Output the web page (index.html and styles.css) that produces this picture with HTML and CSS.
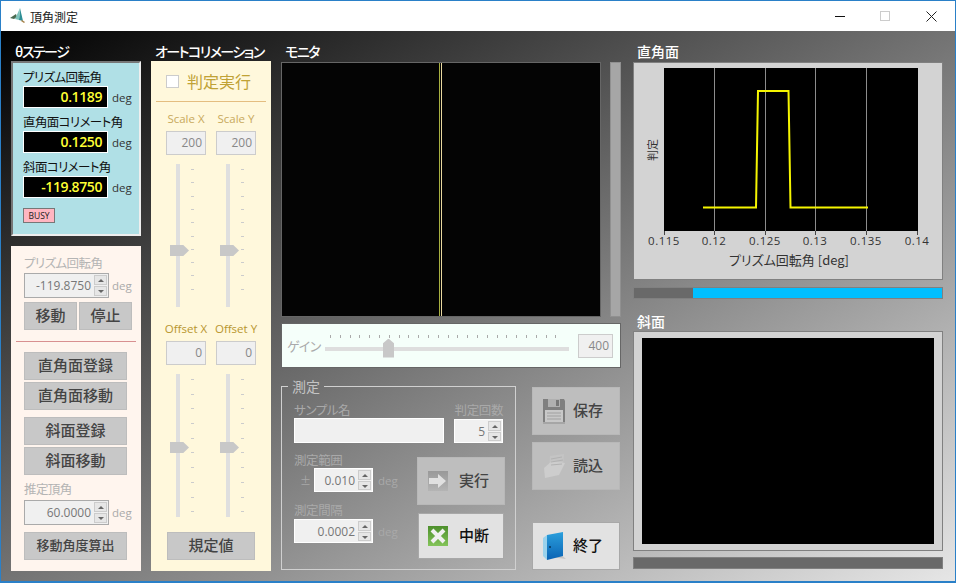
FILE: index.html
```html
<!DOCTYPE html>
<html lang="ja">
<head>
  <meta charset="UTF-8" />
  <title>頂角測定</title>
  <link rel="stylesheet" href="styles.css">
</head>
<body>
<div class="window">
  <div class="titlebar">
    <svg class="app-icon" width="17" height="16" viewBox="0 0 17 16">
      <path d="M1 10 L7 6 L8 9 L5 11 Z" fill="#4a6a50"/>
      <path d="M11 0 L14 13 L10 12 Z" fill="#2f8f96"/>
      <path d="M11 0 L10 12 L6 11 Z" fill="#7fc4bc"/>
      <path d="M13 12 L16 14 L15 15 L12 13 Z" fill="#a8824a"/>
    </svg>
    <span class="title-text">頂角測定</span>
    <div class="win-controls">
      <span class="win-min"></span>
      <span class="win-max"></span>
      <svg class="win-close" width="11" height="11" viewBox="0 0 11 11"><path d="M0.5 0.5 L10.5 10.5 M10.5 0.5 L0.5 10.5" stroke="#222" stroke-width="1" fill="none"/></svg>
    </div>
  </div>

  <div class="main">
    <!-- stage -->
    <div class="col">
      <div class="col-title title-kana">θステージ</div>
      <div class="stage-panel">
        <div class="stage-label">プリズム回転角</div>
        <div class="stage-row"><div class="readout">0.1189</div><span class="unit">deg</span></div>
        <div class="stage-label">直角面コリメート角</div>
        <div class="stage-row"><div class="readout">0.1250</div><span class="unit">deg</span></div>
        <div class="stage-label">斜面コリメート角</div>
        <div class="stage-row"><div class="readout">-119.8750</div><span class="unit">deg</span></div>
        <div class="busy">BUSY</div>
      </div>
      <div class="move-panel">
        <div class="move-label">プリズム回転角</div>
        <div class="spin-row">
          <div class="spin spin-wide"><span class="spin-val">-119.8750</span><span class="spin-btns"><i class="up"></i><i class="down"></i></span></div>
          <span class="unit-off">deg</span>
        </div>
        <div class="btn-pair">
          <button class="btn btn-half">移動</button>
          <button class="btn btn-half">停止</button>
        </div>
        <div class="red-line"></div>
        <button class="btn btn-full">直角面登録</button>
        <button class="btn btn-full btn-second">直角面移動</button>
        <button class="btn btn-full btn-group">斜面登録</button>
        <button class="btn btn-full btn-second">斜面移動</button>
        <div class="move-label label-apex">推定頂角</div>
        <div class="spin-row">
          <div class="spin spin-wide"><span class="spin-val">60.0000</span><span class="spin-btns"><i class="up"></i><i class="down"></i></span></div>
          <span class="unit-off">deg</span>
        </div>
        <button class="btn btn-full btn-calc">移動角度算出</button>
      </div>
    </div>

    <!-- autocollimation -->
    <div class="col">
      <div class="col-title title-kana">オートコリメーション</div>
      <div class="auto-panel">
        <div class="judge"><span class="check"></span><span>判定実行</span></div>
        <div class="auto-line"></div>
        <div class="pair pair-scale">
          <div class="axis"><div class="axis-label">Scale X</div><div class="numbox">200</div></div>
          <div class="axis"><div class="axis-label">Scale Y</div><div class="numbox">200</div></div>
        </div>
        <div class="pair sliders">
          <div class="vslider"><span class="track"></span><span class="thumb thumb-scale"></span><span class="ticks"></span></div>
          <div class="vslider"><span class="track"></span><span class="thumb thumb-scale"></span><span class="ticks"></span></div>
        </div>
        <div class="pair pair-offset">
          <div class="axis"><div class="axis-label">Offset X</div><div class="numbox">0</div></div>
          <div class="axis"><div class="axis-label">Offset Y</div><div class="numbox">0</div></div>
        </div>
        <div class="pair sliders">
          <div class="vslider"><span class="track"></span><span class="thumb thumb-offset"></span><span class="ticks ticks-offset"></span></div>
          <div class="vslider"><span class="track"></span><span class="thumb thumb-offset"></span><span class="ticks ticks-offset"></span></div>
        </div>
        <button class="btn btn-default">規定値</button>
      </div>
    </div>

    <!-- monitor -->
    <div class="col">
      <div class="col-title title-kana">モニタ</div>
      <div class="monitor-row">
        <div class="monitor"><span class="cross-y"></span><span class="cross-w"></span></div>
        <div class="monitor-scroll"></div>
      </div>
      <div class="gain-panel">
        <span class="gain-label">ゲイン</span>
        <div class="gain-slider"><span class="gain-ticks"></span><span class="gain-track"></span><span class="gain-thumb"></span></div>
        <div class="numbox gain-box">400</div>
      </div>
      <div class="lower">
        <fieldset class="measure">
          <legend>測定</legend>
          <div class="measure-top">
            <div>
              <div class="off-label">サンプル名</div>
              <div class="sample-input"></div>
            </div>
            <div class="count-block">
              <div class="off-label">判定回数</div>
              <div class="spin spin-count"><span class="spin-val">5</span><span class="spin-btns"><i class="up"></i><i class="down"></i></span></div>
            </div>
          </div>
          <div class="measure-bottom">
            <div class="measure-fields">
              <div class="off-label">測定範囲</div>
              <div class="field-row">
                <span class="pm">±</span>
                <div class="spin spin-range"><span class="spin-val">0.010</span><span class="spin-btns"><i class="up"></i><i class="down"></i></span></div>
                <span class="unit-faint">deg</span>
              </div>
              <div class="off-label label-step">測定間隔</div>
              <div class="field-row field-row-step">
                <div class="spin spin-step"><span class="spin-val">0.0002</span><span class="spin-btns"><i class="up"></i><i class="down"></i></span></div>
                <span class="unit-faint">deg</span>
              </div>
            </div>
            <div class="measure-btns">
              <button class="icon-btn off">
                <svg width="20" height="20" viewBox="0 0 20 20">
                  <defs><linearGradient id="arrowBg" x1="0" y1="0" x2="0" y2="1"><stop offset="0" stop-color="#999"/><stop offset="1" stop-color="#b4b4b4"/></linearGradient></defs>
                  <rect width="20" height="20" fill="url(#arrowBg)"/>
                  <path d="M1 7 H10 V3 L18 10 L10 17 V13 H1 Z" fill="#e0e0e0"/>
                </svg>
                <span>実行</span>
              </button>
              <button class="icon-btn on btn-stop">
                <svg width="20" height="20" viewBox="0 0 20 20">
                  <defs><linearGradient id="stopBg" x1="0" y1="0" x2="0" y2="1"><stop offset="0" stop-color="#4d8f2c"/><stop offset="1" stop-color="#84c45a"/></linearGradient></defs>
                  <rect width="20" height="20" fill="url(#stopBg)"/>
                  <path d="M4 4 L16 16 M16 4 L4 16" stroke="#f0f0f0" stroke-width="4"/>
                </svg>
                <span>中断</span>
              </button>
            </div>
          </div>
        </fieldset>
        <div class="file-btns">
          <button class="icon-btn off">
            <svg width="24" height="26" viewBox="0 0 24 26">
              <path d="M1 1 H22 L23 3 V24 H1 Z" fill="#7f7f7f"/>
              <rect x="6" y="1" width="12" height="8" fill="#b0b0b0"/>
              <rect x="14" y="2" width="3" height="6" fill="#777"/>
              <rect x="3" y="12" width="18" height="12" fill="#c8c8c8"/>
              <path d="M5 15 H19 M5 18 H19 M5 21 H19" stroke="#a0a0a0"/>
              <rect x="1" y="24" width="22" height="2" fill="#a6a6a6"/>
            </svg>
            <span>保存</span>
          </button>
          <button class="icon-btn off btn-load">
            <svg width="24" height="26" viewBox="0 0 24 26">
              <path d="M8 3 L22 1 L21 14 L7 16 Z" fill="#c4c4c4"/>
              <path d="M2 15 L10 8 L23 10 L17 22 L3 25 Z" fill="#cdcdcd"/>
              <path d="M9 6 L20 4 M9 9 L21 7 M9 12 L20 11" stroke="#b2b2b2"/>
            </svg>
            <span>読込</span>
          </button>
          <button class="icon-btn on btn-quit">
            <svg width="24" height="28" viewBox="0 0 24 28">
              <defs><linearGradient id="doorBg" x1="0" y1="0" x2="0" y2="1"><stop offset="0" stop-color="#2b9fdc"/><stop offset="1" stop-color="#0a63b4"/></linearGradient></defs>
              <path d="M1 24 L24 27 L18 22 Z" fill="#c4c4c4"/>
              <path d="M5 3 L21 0 V24 L5 28 Z" fill="url(#doorBg)"/>
              <path d="M1 6 L5 3 V28 L1 24 Z" fill="#9ad2ec"/>
              <circle cx="8" cy="15" r="1" fill="#06365a"/>
            </svg>
            <span>終了</span>
          </button>
        </div>
      </div>
    </div>

    <!-- charts -->
    <div class="col">
      <div class="col-title">直角面</div>
      <div class="chart-panel">
        <svg class="chart" width="308" height="216" viewBox="634 63 308 216">
          <rect x="664" y="68" width="254" height="163" fill="#000"/>
          <path d="M714.5 68 V231 M765.5 68 V231 M815.5 68 V231 M866.5 68 V231" stroke="#8c8c8c" fill="none"/>
          <path d="M664.5 231 V235 M714.5 231 V235 M765.5 231 V235 M815.5 231 V235 M866.5 231 V235 M917.5 231 V235" stroke="#444" fill="none"/>
          <path d="M703 207.5 H756 L758 91 H788.5 L790.5 207.5 H868" stroke="#f5f500" stroke-width="2" fill="none"/>
          <g class="tick-text">
            <text x="664" y="245">0.115</text>
            <text x="714" y="245">0.12</text>
            <text x="765" y="245">0.125</text>
            <text x="815" y="245">0.13</text>
            <text x="866" y="245">0.135</text>
            <text x="917" y="245">0.14</text>
          </g>
          <text class="axis-text" x="789" y="265">プリズム回転角 [deg]</text>
          <text class="axis-text small" transform="translate(657 150) rotate(-90)">判定</text>
        </svg>
      </div>
      <div class="progress"><span class="progress-fill"></span></div>
      <div class="col-title title-slope">斜面</div>
      <div class="slope-panel"><div class="slope-view"></div></div>
      <div class="progress progress-low"></div>
    </div>
  </div>
</div>
</body>
</html>
```

FILE: styles.css
```css
* {
  box-sizing: border-box;
}
html, body {
  margin: 0;
  height: 100%;
}
body {
  font-family: "Noto Sans CJK JP", "Noto Sans", sans-serif;
  font-feature-settings: "palt";
  font-size: 13px;
  color: #222;
  overflow: hidden;
}
.window {
  width: 956px;
  height: 583px;
  border: 1px solid #2a80c8;
  border-bottom-width: 2px;
  display: flex;
  flex-direction: column;
}
.titlebar {
  height: 30px;
  background: #fff;
  display: flex;
  align-items: center;
  padding-left: 8px;
  flex: none;
}
.title-text {
  margin-left: 4px;
  font-size: 12px;
  color: #222;
}
.win-controls {
  margin-left: auto;
  display: flex;
  align-items: center;
}
.win-min {
  width: 10px;
  height: 1px;
  background: #111;
  margin-right: 35px;
}
.win-max {
  width: 10px;
  height: 10px;
  border: 1px solid #ccc;
  margin-right: 36px;
}
.win-close {
  margin-right: 18px;
}

.main {
  flex: 1;
  background: linear-gradient(to bottom right, #000, #e6e6e6);
  display: grid;
  grid-template-columns: 130px 120px 340px 310px;
  column-gap: 10px;
  padding: 12px 0 0 10px;
}
.main > .col:last-child {
  margin: 0 -2px 0 2px;
}
.col-title {
  color: #fff;
  font-size: 14px;
  font-weight: 500;
  line-height: 16px;
  height: 18px;
  padding-left: 4px;
  white-space: nowrap;
}
.title-kana {
  letter-spacing: -1.5px;
}

/* stage */
.stage-panel {
  height: 175px;
  background: #b0e0e6;
  border: 2px solid #777;
  border-right-color: #eee;
  border-bottom-color: #eee;
  padding: 6px 0 0 10px;
}
.stage-label {
  font-size: 12.5px;
  letter-spacing: -0.6px;
  line-height: 15px;
  height: 17px;
  color: #111;
  white-space: nowrap;
}
.stage-row {
  display: flex;
  align-items: center;
  margin-bottom: 6px;
}
.readout {
  width: 85px;
  height: 22px;
  background: #000;
  border: 1px solid #fff;
  color: #ffff33;
  font-family: "Open Sans", sans-serif;
  font-size: 14px;
  font-weight: 600;
  letter-spacing: -0.4px;
  line-height: 20px;
  text-align: right;
  padding-right: 5px;
}
.unit {
  margin-left: 4px;
  font-family: "Open Sans", sans-serif;
  font-size: 11.5px;
  color: #333;
}
.busy {
  width: 32px;
  height: 15px;
  margin-top: 10px;
  background: #ffb6c1;
  border: 1px solid #777;
  font-family: "Open Sans", sans-serif;
  font-size: 8.5px;
  line-height: 13px;
  text-align: center;
  color: #222;
}

.move-panel {
  height: 325px;
  margin-top: 10px;
  background: #fff5ee;
  padding: 9px 0 0 13px;
}
.move-label {
  font-size: 12.5px;
  letter-spacing: -0.6px;
  line-height: 16px;
  color: #b4b4b4;
  height: 18px;
  white-space: nowrap;
}
.label-apex {
  margin-top: 6px;
  margin-bottom: 1px;
}
.spin-row {
  display: flex;
  align-items: center;
}
.unit-off {
  margin-left: 3px;
  font-family: "Open Sans", sans-serif;
  font-size: 11.5px;
  color: #aaa;
}
.spin {
  height: 25px;
  display: flex;
  align-items: center;
  justify-content: flex-end;
  background: #f0f0f0;
  border: 1px solid #aaa;
  font-family: "Open Sans", sans-serif;
  font-size: 12px;
  color: #777;
}
.spin-wide {
  width: 85px;
}
.spin-val {
  padding-right: 2px;
}
.spin-btns {
  width: 15px;
  height: 100%;
  padding: 1px;
  display: flex;
  flex-direction: column;
  gap: 1px;
}
.spin-btns i {
  flex: 1;
  background: #e6e6e6;
  border: 1px solid #ccc;
  position: relative;
}
.spin-btns i::after {
  content: "";
  position: absolute;
  left: 3px;
  top: 3px;
  border-left: 3px solid transparent;
  border-right: 3px solid transparent;
}
.spin-btns .up::after {
  border-bottom: 3px solid #666;
}
.spin-btns .down::after {
  border-top: 3px solid #666;
}

.btn {
  display: block;
  height: 28px;
  padding: 0 0 4px;
  background: #c8c8c8;
  border: 1px solid #bdbdbd;
  font-family: inherit;
  font-feature-settings: "palt";
  font-size: 15px;
  font-weight: 500;
  color: #444;
}
.btn-pair {
  display: flex;
  gap: 2px;
  margin-top: 4px;
}
.btn-half {
  width: 53px;
}
.btn-full {
  width: 103px;
}
.red-line {
  height: 1px;
  background: #d89090;
  margin: 11px 0 10px -8px;
  width: 120px;
}
.btn-second {
  margin-top: 2px;
}
.btn-group {
  margin-top: 7px;
}
.btn-calc {
  margin-top: 7px;
  font-size: 13px;
}

/* autocollimation */
.auto-panel {
  height: 510px;
  background: #fff8dc;
  padding: 0 5px;
}
.judge {
  display: flex;
  align-items: center;
  gap: 8px;
  height: 40px;
  padding-left: 10px;
  font-size: 16px;
  color: #c0a236;
}
.check {
  width: 13px;
  height: 13px;
  background: #fff;
  border: 1px solid #ccc;
}
.auto-line {
  height: 1px;
  background: #e4bd80;
}
.pair {
  display: flex;
  justify-content: center;
  gap: 10px;
}
.pair-scale {
  margin-top: 6px;
}
.pair-offset {
  margin-top: 11px;
}
.axis {
  width: 40px;
  display: flex;
  flex-direction: column;
  align-items: center;
}
.axis-label {
  font-family: "Open Sans", sans-serif;
  font-size: 11.5px;
  line-height: 21px;
  margin-bottom: 2px;
  color: #c8a95c;
  white-space: nowrap;
}
.pair-offset .axis-label {
  color: #b8962e;
}
.numbox {
  width: 40px;
  height: 24px;
  background: #f0f0f0;
  border: 1px solid #ccc;
  font-family: "Open Sans", sans-serif;
  font-size: 12px;
  line-height: 22px;
  text-align: right;
  padding-right: 3px;
  color: #888;
}
.sliders {
  margin-top: 9px;
}
.vslider {
  width: 40px;
  height: 143px;
  position: relative;
}
.track {
  position: absolute;
  left: 10px;
  top: 0;
  bottom: 0;
  width: 4px;
  background: #dfdfdf;
}
.thumb {
  position: absolute;
  left: 4px;
  width: 19px;
  height: 11px;
  background: #c8c8c8;
  clip-path: polygon(0 0, 70% 0, 100% 50%, 70% 100%, 0 100%);
}
.thumb-scale {
  top: 81px;
}
.thumb-offset {
  top: 68px;
}
.ticks {
  position: absolute;
  left: 25px;
  top: 5px;
  bottom: 5px;
  width: 3px;
  background: repeating-linear-gradient(#ccc 0 1px, transparent 1px 13.3px);
}
.ticks-offset {
  background: repeating-linear-gradient(#ccc 0 1px, transparent 1px 14.7px);
}
.btn-default {
  width: 88px;
  margin: 15px 0 0 11px;
}

/* monitor */
.monitor-row {
  display: flex;
  height: 255px;
  margin-top: 1px;
  gap: 9px;
}
.monitor {
  width: 320px;
  background: #040404;
  border: 1px solid #666;
  position: relative;
}
.cross-y {
  position: absolute;
  left: 157px;
  top: 0;
  bottom: 0;
  width: 1px;
  background: #a8b040;
}
.cross-w {
  position: absolute;
  left: 159px;
  top: 0;
  bottom: 0;
  width: 1px;
  background: #e8d8a0;
}
.monitor-scroll {
  width: 11px;
  background: #a6a6a6;
  border: 1px solid #909090;
}
.gain-panel {
  height: 45px;
  margin-top: 6px;
  background: #f5fffa;
  border: 1px solid #666;
  display: flex;
  align-items: center;
  padding-left: 5px;
}
.gain-label {
  width: 38px;
  font-size: 13px;
  letter-spacing: -0.5px;
  color: #aaa;
}
.gain-slider {
  width: 244px;
  height: 44px;
  position: relative;
}
.gain-ticks {
  position: absolute;
  left: 5px;
  right: 4px;
  top: 11px;
  height: 3px;
  background: repeating-linear-gradient(to right, #aaa 0 1px, transparent 1px 9.8px);
}
.gain-track {
  position: absolute;
  left: 0;
  right: 0;
  top: 23px;
  height: 4px;
  background: #dedede;
}
.gain-thumb {
  position: absolute;
  left: 58px;
  top: 15px;
  width: 11px;
  height: 19px;
  background: #c8c8c8;
  clip-path: polygon(50% 0, 100% 25%, 100% 100%, 0 100%, 0 25%);
}
.gain-box {
  width: 35px;
  height: 24px;
  margin-left: 9px;
}

.lower {
  display: flex;
  margin-top: 9px;
}
.measure {
  width: 235px;
  height: 193px;
  margin: 0;
  padding: 0 12px;
  border: 1px solid #d0d0d0;
}
.measure legend {
  margin-left: -6px;
  padding: 0 4px;
  font-size: 14px;
  line-height: 18px;
  color: #c4c4c4;
}
.measure-top {
  display: flex;
  justify-content: space-between;
  margin-top: 7px;
}
.off-label {
  font-size: 12.5px;
  letter-spacing: -0.4px;
  line-height: 15px;
  height: 16px;
  color: #a9a9a9;
  white-space: nowrap;
}
.sample-input {
  width: 150px;
  height: 25px;
  background: #f0f0f0;
  border: 1px solid #fff;
}
.count-block {
  display: flex;
  flex-direction: column;
  align-items: flex-end;
}
.spin-count {
  width: 49px;
  height: 24px;
  margin-top: 1px;
  border-color: #fff;
}
.measure-bottom {
  display: flex;
  justify-content: space-between;
  margin-top: 9px;
}
.field-row {
  display: flex;
  align-items: center;
}
.field-row-step {
  margin-top: 1px;
}
.pm {
  width: 20px;
  padding-left: 6px;
  font-size: 11px;
  color: #a8a8a8;
}
.spin-range {
  width: 59px;
  height: 24px;
  border-color: #fff;
}
.spin-step {
  width: 79px;
  height: 24px;
  border-color: #fff;
}
.unit-faint {
  margin-left: 5px;
  font-family: "Open Sans", sans-serif;
  font-size: 11.5px;
  color: #a9a9a9;
}
.label-step {
  margin-top: 10px;
}
.measure-btns {
  width: 88px;
  margin: 5px -2px 0 0;
}
.icon-btn {
  width: 88px;
  height: 48px;
  display: flex;
  align-items: center;
  gap: 11px;
  padding: 0 0 0 10px;
  font-family: inherit;
  font-feature-settings: "palt";
  font-size: 15px;
  font-weight: 500;
}
.icon-btn span {
  padding-bottom: 4px;
}
.icon-btn.off {
  background: #bebebe;
  border: 1px solid #b8b8b8;
  color: #444;
}
.icon-btn.on {
  background: #e2e2e2;
  border: 1px solid #a8a8a8;
  color: #111;
}
.btn-stop {
  width: 86px;
  height: 46px;
  margin: 8px 0 0 1px;
  padding-left: 9px;
}
.file-btns {
  margin: 10px 0 0 16px;
}
.file-btns .icon-btn {
  gap: 7px;
  padding-left: 9px;
}
.btn-load {
  margin-top: 7px;
}
.btn-quit {
  margin-top: 32px;
}

/* charts */
.chart-panel {
  height: 218px;
  margin-top: 1px;
  background: #d3d3d3;
  border: 1px solid #808080;
}
.chart {
  display: block;
}
.tick-text text {
  font-family: "Open Sans", sans-serif;
  font-size: 11.5px;
  letter-spacing: 0.5px;
  text-anchor: middle;
  fill: #333;
}
.axis-text {
  font-size: 13px;
  text-anchor: middle;
  fill: #333;
}
.axis-text.small {
  font-size: 11px;
}
.progress {
  height: 12px;
  margin-top: 7px;
  background: #696969;
  border: 1px solid #808080;
  padding-left: 59px;
}
.progress-fill {
  display: block;
  height: 100%;
  background: #00bfff;
}
.title-slope {
  margin-top: 14px;
}
.slope-panel {
  height: 220px;
  background: #d3d3d3;
  border: 1px solid #808080;
  padding: 6px 8px;
}
.slope-view {
  height: 206px;
  background: #000;
}
.progress-low {
  margin-top: 6px;
}
```
